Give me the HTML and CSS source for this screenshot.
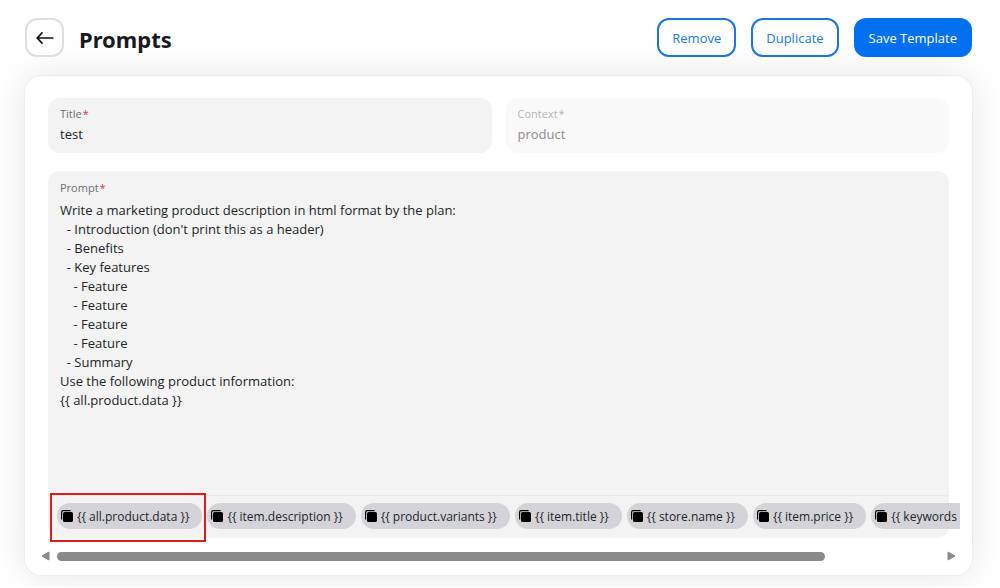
FILE: index.html
```html
<!DOCTYPE html>
<html lang="en">

<head>
  <meta charset="UTF-8">
  <meta name="viewport" content="width=device-width, initial-scale=1.0">
  <title>Prompts</title>

  <link rel="stylesheet" href="styles.css">
</head>

<body>
  <svg class="sprite" aria-hidden="true">
    <symbol id="copy" viewBox="0 0 12 12">
      <path d="M0.6 9.4V2.2Q0.6 0.6 2.2 0.6H9.6" fill="none" stroke="#000" stroke-width="1.2" />
      <rect x="2" y="2" width="10" height="10" rx="1.6" />
    </symbol>
  </svg>

  <header class="header">
    <button class="btn-back" aria-label="Back">
      <svg width="18" height="14" viewBox="0 0 18 14">
        <path d="M6 1.8L1.2 7L6 12.2M1.4 7H16.8" />
      </svg>
    </button>
    <h1>Prompts</h1>
    <div class="actions">
      <button class="btn">Remove</button>
      <button class="btn">Duplicate</button>
      <button class="btn btn-primary">Save Template</button>
    </div>
  </header>

  <main class="card">
    <form class="form">
      <div class="row">
        <div class="field">
          <label for="title">Title<span class="req">*</span></label>
          <input id="title" type="text" value="test">
        </div>
        <div class="field disabled">
          <label for="context">Context<span class="req">*</span></label>
          <input id="context" type="text" value="product" disabled>
        </div>
      </div>
      <div class="field prompt">
        <label for="prompt">Prompt<span class="req">*</span></label>
        <textarea id="prompt">Write a marketing product description in html format by the plan:
  - Introduction (don't print this as a header)
  - Benefits
  - Key features
    - Feature
    - Feature
    - Feature
    - Feature
  - Summary
Use the following product information:
{{ all.product.data }}</textarea>
        <div class="chips">
          <button type="button" class="chip marked"><svg><use href="#copy" /></svg>{{ all.product.data }}</button>
          <button type="button" class="chip"><svg><use href="#copy" /></svg>{{ item.description }}</button>
          <button type="button" class="chip"><svg><use href="#copy" /></svg>{{ product.variants }}</button>
          <button type="button" class="chip"><svg><use href="#copy" /></svg>{{ item.title }}</button>
          <button type="button" class="chip"><svg><use href="#copy" /></svg>{{ store.name }}</button>
          <button type="button" class="chip"><svg><use href="#copy" /></svg>{{ item.price }}</button>
          <button type="button" class="chip"><svg><use href="#copy" /></svg>{{ keywords }}</button>
        </div>
      </div>
    </form>
    <div class="scrollbar">
      <svg width="9" height="10" viewBox="0 0 9 10"><path d="M8 1V9L1 5Z" /></svg>
      <div class="track">
        <div class="thumb"></div>
      </div>
      <svg width="9" height="10" viewBox="0 0 9 10"><path d="M1 1V9L8 5Z" /></svg>
    </div>
  </main>
</body>

</html>
```
FILE: styles.css
```css
* {
  margin: 0;
  padding: 0;
  box-sizing: border-box;
}

body {
  padding: 18px 28px 12px 25px;
  background: #fff;
  color: #212529;
  font-family: "Open Sans", "Noto Sans", sans-serif;
  font-size: 13px;
  line-height: 19px;
}

button,
input,
textarea {
  border: none;
  background: transparent;
  color: inherit;
  font: inherit;
}

.sprite {
  position: absolute;
  width: 0;
  height: 0;
}

.header {
  display: flex;
  align-items: center;
  margin-bottom: 19px;
}

.header h1 {
  margin-left: 15px;
  padding-top: 2px;
  font-family: "Noto Sans", "Open Sans", sans-serif;
  font-size: 22px;
  line-height: 26px;
  font-weight: 700;
  color: #161a1d;
}

.btn-back {
  display: flex;
  justify-content: center;
  align-items: center;
  width: 39px;
  height: 39px;
  border: 2px solid #dedede;
  border-radius: 12px;
}

.btn-back path {
  fill: none;
  stroke: #111;
  stroke-width: 1.7;
  stroke-linecap: round;
  stroke-linejoin: round;
}

.actions {
  display: flex;
  gap: 15px;
  margin-left: auto;
}

.btn {
  height: 39px;
  padding: 1px 13px 0;
  border: 2px solid #1c74dc;
  border-radius: 12px;
  color: #1c7ae0;
}

.btn-primary {
  border-color: #0070f0;
  background: #0070f0;
  color: #fff;
}

.card {
  padding: 22px 12px 14px;
  border-radius: 16px;
  background: #fff;
  box-shadow: 0 0 2px rgba(0, 0, 0, .12), 0 0 40px rgba(0, 0, 0, .1);
}

/* chips run past the field and are cut at the edge of the form */
.form {
  padding: 0 11px 6px;
  overflow: hidden;
}

.row {
  display: flex;
  gap: 14px;
  margin-bottom: 18px;
}

.field {
  flex: 1 1 0;
  min-width: 0;
  padding: 6px 12px 9px;
  border-radius: 12px;
  background: #f3f3f3;
}

.field label {
  display: block;
  font-size: 11px;
  color: #6c6e73;
}

.field input,
.field textarea {
  display: block;
  width: 100%;
  outline: none;
}

.field input {
  height: 21px;
}

.req {
  margin-left: 1px;
  color: #dc3545;
}

.disabled {
  background: #f9f9f9;
}

.disabled label,
.disabled .req {
  color: #b5b5b5;
}

.disabled input {
  color: #8c8c8c;
}

.prompt {
  padding: 7px 0 9px;
}

.prompt label {
  padding: 0 12px;
}

.prompt textarea {
  height: 298px;
  padding: 4px 12px;
  resize: none;
}

.chips {
  display: flex;
  gap: 5px;
  padding: 7px 0 0 9px;
  border-top: 1px solid #e9e9e9;
}

.chip {
  position: relative;
  flex: none;
  display: flex;
  align-items: center;
  gap: 4px;
  height: 26px;
  padding: 0 13px 0 4px;
  border-radius: 13px;
  background: #d4d4d8;
  font-size: 12px;
}

.chip svg {
  width: 12px;
  height: 12px;
}

.marked::after {
  content: "";
  position: absolute;
  inset: -10px -4px -13px -7px;
  border: 2px solid #e01b1b;
}

.scrollbar {
  display: flex;
  align-items: center;
  gap: 7px;
  margin-top: 7px;
  padding: 0 4px;
}

.scrollbar svg {
  fill: #8a8a8a;
  stroke: #8a8a8a;
  stroke-linejoin: round;
}

.track {
  flex: 1;
}

.thumb {
  width: 87%;
  height: 9px;
  border-radius: 5px;
  background: #8a8a8a;
}
```
